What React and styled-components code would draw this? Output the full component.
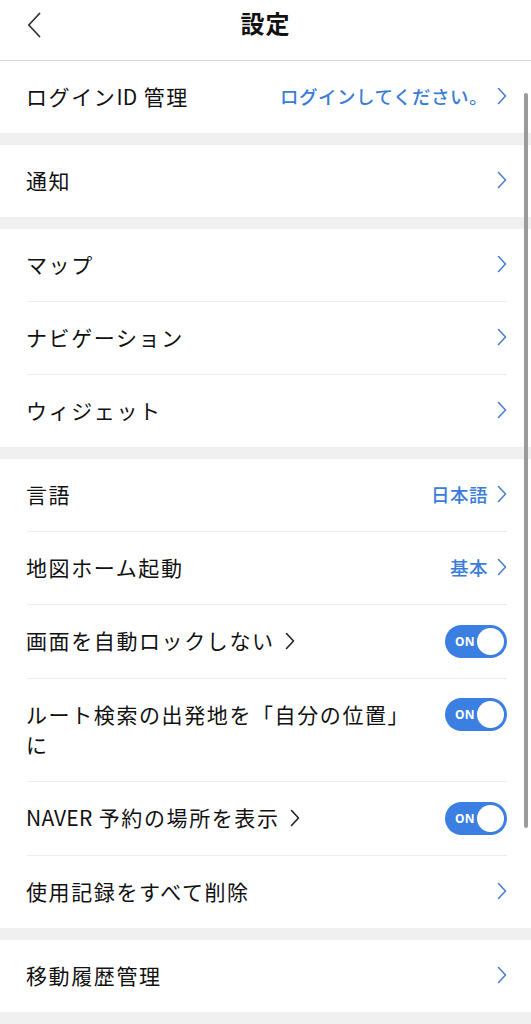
import React from 'react';
import styled, { createGlobalStyle } from 'styled-components';

const GlobalStyle = createGlobalStyle`
  html, body {
    margin: 0;
    padding: 0;
    background: #f0f0f0;
  }
  body {
    font-family: "Noto Sans CJK JP", "Noto Sans", sans-serif;
    color: #111;
    -webkit-font-smoothing: antialiased;
  }
`;

const Screen = styled.div`
  position: relative;
  width: 531px;
  min-height: 1024px;
  background: #f0f0f0;
  overflow: hidden;
`;

const Header = styled.header`
  display: flex;
  align-items: center;
  justify-content: center;
  position: relative;
  height: 60px;
  background: #fff;
  border-bottom: 1px solid #d6d6d6;
`;

const BackButton = styled.button`
  position: absolute;
  left: 22px;
  top: 10px;
  width: 24px;
  height: 30px;
  padding: 0;
  border: 0;
  background: none;
  display: flex;
  align-items: center;
  justify-content: center;
`;

const Title = styled.h1`
  margin: -14px 0 0;
  font-size: 24px;
  font-weight: 700;
  line-height: 1;
  letter-spacing: 1px;
`;

const Group = styled.section`
  background: #fff;
  margin-bottom: 12px;
`;

const Row = styled.div`
  display: flex;
  align-items: ${(p) => (p.$top ? 'flex-start' : 'center')};
  min-height: 72px;
  box-sizing: border-box;
  padding: 20px 24px 22px 26px;

  & + & {
    border-top: 1px solid #ececec;
    margin: 0 24px 0 27px;
    padding-left: 0;
    padding-right: 0;
  }
`;

const Label = styled.span`
  flex: ${(p) => (p.$narrow ? '0 0 395px' : '1')};
  font-size: 21px;
  font-weight: 400;
  line-height: 30px;
  letter-spacing: 1.6px;
  margin-left: ${(p) => (p.$inner ? '-1px' : '0')};
`;

const Latin = styled.span`
  letter-spacing: 0.2px;
`;

const Spacer = styled.span`
  flex: 1;
`;

const Value = styled.span`
  display: flex;
  align-items: center;
  gap: 9px;
  color: #3a7dd8;
  font-size: 18.5px;
  font-weight: 500;
  line-height: 30px;
  letter-spacing: 0.5px;
`;

const Toggle = styled.span`
  display: inline-flex;
  align-items: center;
  box-sizing: border-box;
  width: 62px;
  height: 33px;
  margin: -1px 0 -2px;
  border-radius: 17px;
  background: #3b7fe3;
  padding: 0 3px 0 10px;
  flex-shrink: 0;
`;

const ToggleText = styled.span`
  flex: 1;
  color: #fff;
  font-family: "Noto Sans", sans-serif;
  font-size: 12px;
  font-weight: 700;
  letter-spacing: 0.3px;
`;

const Knob = styled.span`
  width: 27px;
  height: 27px;
  border-radius: 50%;
  background: #fff;
`;

const Scrollbar = styled.div`
  position: absolute;
  right: 3px;
  top: 93px;
  width: 4px;
  height: 735px;
  border-radius: 2px;
  background: #9b9b9b;
`;

const InlineChevron = styled.span`
  display: inline-block;
  margin-left: 10px;
  vertical-align: -1px;
`;

const Chevron = ({ color = '#4d7fcf' }) => (
  <svg width="10" height="18" viewBox="0 0 10 18" fill="none" aria-hidden="true">
    <path d="M1.5 1.5 L8.5 9 L1.5 16.5" stroke={color} strokeWidth="1.6" strokeLinecap="round" strokeLinejoin="round" />
  </svg>
);

const SwitchOn = () => (
  <Toggle>
    <ToggleText>ON</ToggleText>
    <Knob />
  </Toggle>
);

const App = () => (
  <>
    <GlobalStyle />
    <Screen>
      <Header>
        <BackButton aria-label="戻る">
          <svg width="14" height="26" viewBox="0 0 14 26" fill="none">
            <path d="M12.5 1.5 L1.8 13 L12.5 24.5" stroke="#333" strokeWidth="1.8" strokeLinecap="round" strokeLinejoin="round" />
          </svg>
        </BackButton>
        <Title>設定</Title>
      </Header>

      <Group>
        <Row>
          <Label>ログイン<Latin>ID</Latin> 管理</Label>
          <Value>
            ログインしてください。
            <Chevron />
          </Value>
        </Row>
      </Group>

      <Group>
        <Row>
          <Label>通知</Label>
          <Chevron />
        </Row>
      </Group>

      <Group>
        <Row>
          <Label>マップ</Label>
          <Chevron />
        </Row>
        <Row>
          <Label $inner>ナビゲーション</Label>
          <Chevron />
        </Row>
        <Row>
          <Label $inner>ウィジェット</Label>
          <Chevron />
        </Row>
      </Group>

      <Group>
        <Row>
          <Label>言語</Label>
          <Value>
            日本語
            <Chevron />
          </Value>
        </Row>
        <Row>
          <Label $inner>地図ホーム起動</Label>
          <Value>
            基本
            <Chevron />
          </Value>
        </Row>
        <Row>
          <Label $inner>
            画面を自動ロックしない
            <InlineChevron>
              <Chevron color="#222" />
            </InlineChevron>
          </Label>
          <SwitchOn />
        </Row>
        <Row $top>
          <Label $inner $narrow>ルート検索の出発地を「自分の位置」に</Label>
          <Spacer />
          <SwitchOn />
        </Row>
        <Row>
          <Label $inner>
            <Latin>NAVER</Latin> 予約の場所を表示
            <InlineChevron>
              <Chevron color="#222" />
            </InlineChevron>
          </Label>
          <SwitchOn />
        </Row>
        <Row>
          <Label $inner>使用記録をすべて削除</Label>
          <Chevron />
        </Row>
      </Group>

      <Group>
        <Row>
          <Label>移動履歴管理</Label>
          <Chevron />
        </Row>
      </Group>

      <Scrollbar />
    </Screen>
  </>
);

export default App;
